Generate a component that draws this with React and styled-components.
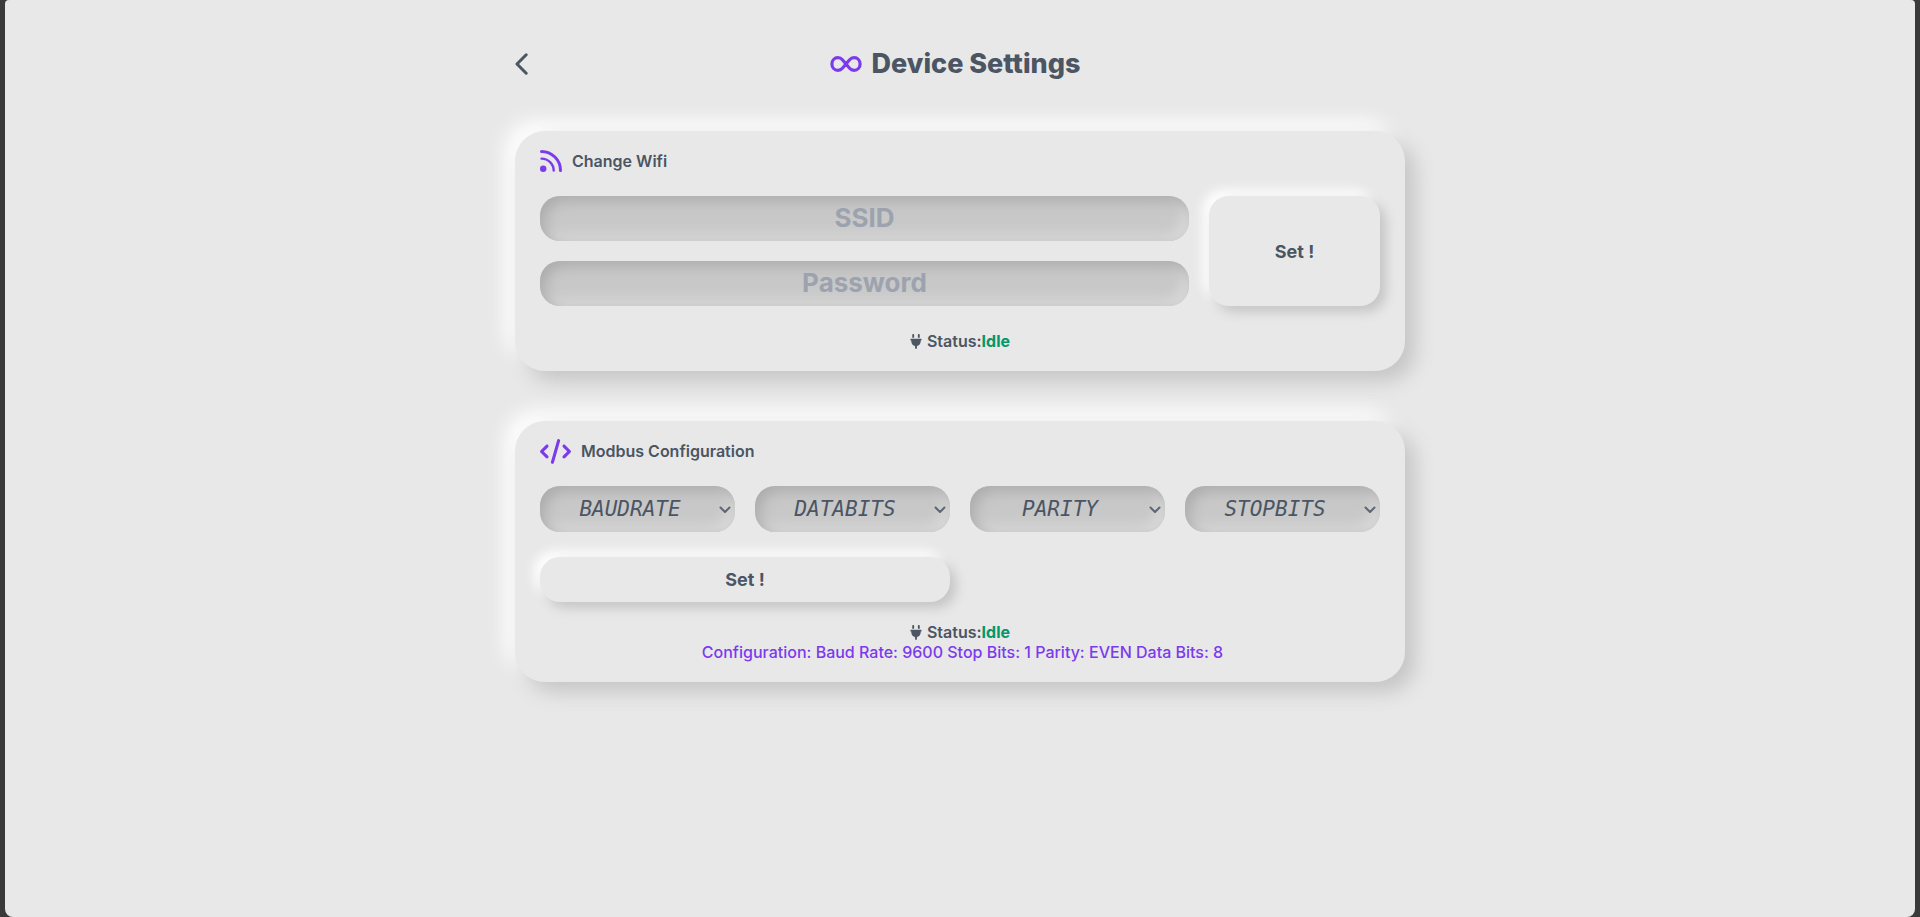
import React from "react";
import styled, { createGlobalStyle } from "styled-components";
import { FaCode, FaPlug } from "react-icons/fa6";

const GlobalStyle = createGlobalStyle`
  *, *::before, *::after { box-sizing: border-box; }
  body {
    margin: 0;
    background: #3a3a3a;
    color: #4b5563;
    font-family: Inter, "Open Sans", sans-serif;
    font-size: 16px;
    line-height: 20px;
  }
  h1, h2, p { margin: 0; }
`;

const Frame = styled.div`
  min-height: 100vh;
  padding: 0 5px;
`;

const Page = styled.main`
  min-height: 100vh;
  padding: 43px 20px;
  background: #e8e8e8;
  border-radius: 4px 4px 8px 8px;
`;

const Content = styled.div`
  max-width: 890px;
  margin: 0 auto;
`;

const Header = styled.header`
  display: grid;
  grid-template-columns: 20px 1fr 30px;
  align-items: center;
  height: 42px;
  margin-bottom: 46px;
`;

const BackLink = styled.a`
  display: flex;
  color: #4b5563;
`;

const Title = styled.h1`
  display: flex;
  align-items: center;
  justify-content: center;
  gap: 10px;
  font-size: 27px;
  line-height: 40px;
  font-weight: 800;
`;

const Glyph = styled.svg`
  display: block;
  flex: none;
  fill: none;
  stroke: ${(p) => (p.$accent ? "#7c3aed" : "currentColor")};
  stroke-linecap: round;
  stroke-linejoin: round;
`;

const Card = styled.section`
  padding: 20px 25px;
  border-radius: 30px;
  background: #e8e8e8;
  box-shadow: 10px 10px 20px #c5c5c5, -10px -10px 20px #ffffff;
  & + & { margin-top: 50px; }
`;

const CardTitle = styled.h2`
  display: flex;
  align-items: center;
  gap: 10px;
  height: 20px;
  margin-bottom: 25px;
  font-size: 16px;
  line-height: 20px;
  font-weight: 600;
`;

const CodeIcon = styled(FaCode)`
  width: 31px;
  height: 25px;
  color: #7c3aed;
`;

const WifiForm = styled.form`
  display: grid;
  grid-template-columns: 1fr 171px;
  gap: 20px;
  margin-bottom: 25px;
`;

const Fields = styled.div`
  display: flex;
  flex-direction: column;
  gap: 20px;
`;

const Field = styled.input`
  width: 100%;
  height: 45px;
  padding: 0 0 2px;
  border: 0;
  border-radius: 20px;
  background: #c8c8c8;
  box-shadow: inset 5px 5px 14px #ababab, inset -5px -5px 14px #dedede;
  color: #4b5563;
  font: 700 26px/32px Inter, "Open Sans", sans-serif;
  text-align: center;
  &::placeholder { color: #9ca3af; opacity: 1; }
`;

const SetButton = styled.button`
  width: ${(p) => (p.$wide ? "auto" : "100%")};
  grid-column: ${(p) => (p.$wide ? "span 2" : "auto")};
  min-height: 45px;
  padding: 1px 0 0;
  border: 0;
  border-radius: 20px;
  background: #e8e8e8;
  box-shadow: 6px 6px 12px #c5c5c5, -6px -6px 12px #ffffff;
  color: #4b5563;
  font: 700 18px/24px Inter, "Open Sans", sans-serif;
`;

const ModbusForm = styled.form`
  display: grid;
  grid-template-columns: repeat(4, 1fr);
  gap: 25px 20px;
  margin-bottom: 20px;
`;

const SelectBox = styled.div`
  position: relative;
  display: flex;
`;

const Select = styled.select`
  appearance: none;
  width: 100%;
  height: 46px;
  padding: 0 15px 0 0;
  border: 0;
  border-radius: 20px;
  background: #c8c8c8;
  box-shadow: inset 5px 5px 14px #ababab, inset -5px -5px 14px #dedede;
  color: #4b5563;
  font: italic 400 21px/26px "DejaVu Sans Mono", monospace;
  text-align: center;
  text-align-last: center;
`;

const SelectArrow = styled(Glyph)`
  position: absolute;
  top: 20px;
  right: 4px;
  opacity: 0.85;
  pointer-events: none;
`;

const StatusLine = styled.p`
  display: flex;
  align-items: center;
  justify-content: center;
  font-weight: 600;
`;

const PlugIcon = styled(FaPlug)`
  width: 12px;
  height: 15px;
  margin-right: 5px;
`;

const StatusValue = styled.span`
  color: #059669;
  font-weight: 700;
`;

const Summary = styled.p`
  padding-left: 5px;
  color: #7c3aed;
  font-weight: 500;
  text-align: center;
`;

function Status({ value }) {
  return (
    <StatusLine>
      <PlugIcon aria-hidden="true" />
      Status:<StatusValue>{value}</StatusValue>
    </StatusLine>
  );
}

const selects = [
  { label: "BAUDRATE", options: ["9600", "19200", "38400", "115200"] },
  { label: "DATABITS", options: ["7", "8"] },
  { label: "PARITY", options: ["NONE", "EVEN", "ODD"] },
  { label: "STOPBITS", options: ["1", "2"] },
];

export default function App() {
  const stop = (e) => e.preventDefault();
  return (
    <Frame>
      <GlobalStyle />
      <Page>
        <Content>
          <Header>
            <BackLink href="#" aria-label="Back">
              <Glyph width="14" height="24" viewBox="0 0 14 24" strokeWidth="3">
                <path d="M11.200 2.800 2 12l9.200 9.200" />
              </Glyph>
            </BackLink>
            <Title>
              <Glyph $accent width="32" height="20" viewBox="0 0 32 20" strokeWidth="3.200">
                <path d="M16 10 12.400 5.700A6 6 0 0 0 7.900 3.700C4.400 3.700 1.900 6.400 1.900 10s2.500 6.300 6 6.300a6 6 0 0 0 4.500-2L19.600 5.700a6 6 0 0 1 4.500-2c3.500 0 6 2.700 6 6.300s-2.500 6.300-6 6.300a6 6 0 0 1-4.500-2Z" />
              </Glyph>
              Device Settings
            </Title>
          </Header>

          <Card>
            <CardTitle>
              <Glyph $accent width="22" height="22" viewBox="0 0 22 22" strokeWidth="2.700">
                <path strokeWidth="3" d="M1.500 1.500c10.500 0 19 8.500 19 19" />
                <path strokeWidth="2.400" d="M1.500 8.600c6.600 0 12.200 5.300 12.200 12" />
                <circle cx="3.200" cy="18.800" r="3.200" fill="#7c3aed" stroke="none" />
              </Glyph>
              Change Wifi
            </CardTitle>
            <WifiForm onSubmit={stop}>
              <Fields>
                <Field type="text" placeholder="SSID" aria-label="SSID" />
                <Field type="password" placeholder="Password" aria-label="Password" />
              </Fields>
              <SetButton type="submit">Set !</SetButton>
            </WifiForm>
            <Status value="Idle" />
          </Card>

          <Card>
            <CardTitle>
              <CodeIcon aria-hidden="true" />
              Modbus Configuration
            </CardTitle>
            <ModbusForm onSubmit={stop}>
              {selects.map(({ label, options }) => (
                <SelectBox key={label}>
                  <Select aria-label={label} defaultValue="">
                    <option value="">{label}</option>
                    {options.map((o) => (
                      <option key={o}>{o}</option>
                    ))}
                  </Select>
                  <SelectArrow width="12" height="8" viewBox="0 0 12 8" strokeWidth="2" aria-hidden="true">
                    <path d="M1.500 1.500 6 6l4.500-4.500" />
                  </SelectArrow>
                </SelectBox>
              ))}
              <SetButton $wide type="submit">Set !</SetButton>
            </ModbusForm>
            <Status value="Idle" />
            <Summary>
              Configuration: Baud Rate: 9600 Stop Bits: 1 Parity: EVEN Data Bits: 8
            </Summary>
          </Card>
        </Content>
      </Page>
    </Frame>
  );
}
